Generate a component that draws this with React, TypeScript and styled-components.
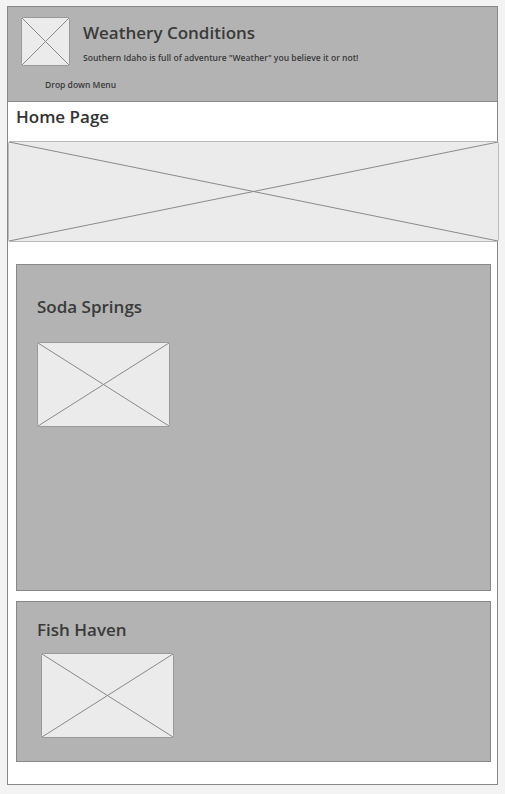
import React from "react";
import styled, { createGlobalStyle } from "styled-components";

const Global = createGlobalStyle`
  html, body { margin: 0; padding: 0; background: #f3f3f3; }
  body { font-family: "Open Sans", "Noto Sans", sans-serif; color: #3a3a3a; }
  * { box-sizing: border-box; }
`;

const Page = styled.div`
  padding: 6px 0 0 7px;
  height: 794px;
`;

const Frame = styled.div`
  width: 491px;
  height: 779px;
  border: 1px solid #888;
  background: #fff;
  display: flex;
  flex-direction: column;
`;

const Header = styled.header`
  height: 95px;
  background: #b3b3b3;
  border-bottom: 1px solid #888;
  padding: 10px 13px 0;
  display: flex;
  flex-direction: column;
`;

const Brand = styled.div`
  display: flex;
  gap: 13px;
  align-items: flex-start;
`;

const TitleBlock = styled.div`
  display: flex;
  flex-direction: column;
  padding-top: 4px;
`;

const Title = styled.h1`
  margin: 0;
  font-size: 17px;
  line-height: 24px;
  font-weight: 600;
  color: #3a3a3a;
`;

const Tagline = styled.p`
  margin: 7px 0 0;
  font-size: 8.55px;
  line-height: 12px;
  font-weight: 600;
  color: #3a3a3a;
`;

const Menu = styled.div`
  margin: 13px 0 0 24px;
  font-size: 8.5px;
  line-height: 12px;
  font-weight: 600;
  color: #3a3a3a;
`;

const PageTitle = styled.h2`
  margin: 3px 0 0 8px;
  font-size: 17px;
  line-height: 24px;
  font-weight: 600;
  color: #333;
`;

const Banner = styled.div`
  margin-top: 12px;
  width: 491px;
  height: 101px;
  display: flex;
`;

const Cards = styled.div`
  margin: 22px 0 0 8px;
  display: flex;
  flex-direction: column;
  gap: 10px;
`;

const Card = styled.section<{ $h: number; $padTop: number }>`
  width: 475px;
  height: ${(p) => p.$h}px;
  background: #b3b3b3;
  border: 1px solid #888;
  padding: ${(p) => p.$padTop}px 20px 0;
  display: flex;
  flex-direction: column;
`;

const CardTitle = styled.h3<{ $gap: number }>`
  margin: 0 0 ${(p) => p.$gap}px;
  font-size: 17px;
  line-height: 24px;
  font-weight: 600;
  color: #3a3a3a;
`;

const ImgWrap = styled.div<{ $indent: number }>`
  margin-left: ${(p) => p.$indent}px;
  display: flex;
`;

type PhProps = { w: number; h: number; stroke?: string; border?: string };

function Placeholder({ w, h, stroke = "#8a8a8a", border = "#999" }: PhProps) {
  return (
    <svg width={w} height={h} viewBox={`0 0 ${w} ${h}`} style={{ display: "block" }}>
      <rect x={0.5} y={0.5} width={w - 1} height={h - 1} rx={2} fill="#ebebeb" stroke={border} />
      <line x1={1} y1={1} x2={w - 1} y2={h - 1} stroke={stroke} strokeWidth={1} />
      <line x1={w - 1} y1={1} x2={1} y2={h - 1} stroke={stroke} strokeWidth={1} />
    </svg>
  );
}

export default function App() {
  return (
    <>
      <Global />
      <Page>
        <Frame>
          <Header>
            <Brand>
              <Placeholder w={49} h={49} />
              <TitleBlock>
                <Title>Weathery Conditions</Title>
                <Tagline>Southern Idaho is full of adventure "Weather" you believe it or not!</Tagline>
              </TitleBlock>
            </Brand>
            <Menu>Drop down Menu</Menu>
          </Header>
          <PageTitle>Home Page</PageTitle>
          <Banner>
            <Placeholder w={491} h={101} border="#bbb" />
          </Banner>
          <Cards>
            <Card $h={327} $padTop={30}>
              <CardTitle $gap={23}>Soda Springs</CardTitle>
              <ImgWrap $indent={0}>
                <Placeholder w={133} h={85} />
              </ImgWrap>
            </Card>
            <Card $h={161} $padTop={16}>
              <CardTitle $gap={11}>Fish Haven</CardTitle>
              <ImgWrap $indent={4}>
                <Placeholder w={133} h={85} />
              </ImgWrap>
            </Card>
          </Cards>
        </Frame>
      </Page>
    </>
  );
}
